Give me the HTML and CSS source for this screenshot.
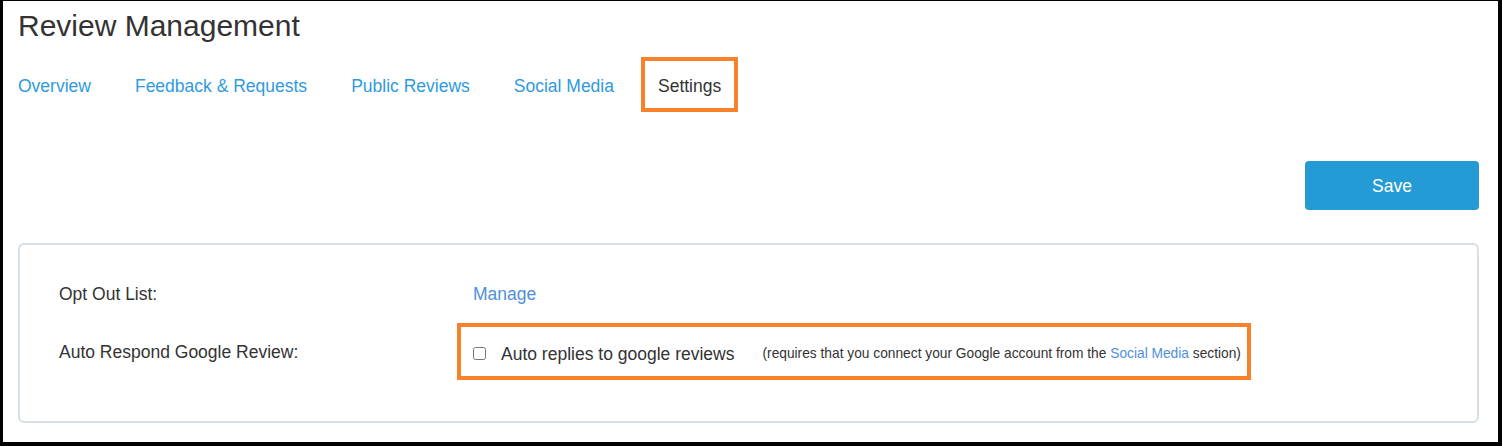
FILE: index.html
```html
<!DOCTYPE html>
<html lang="en">
<head>
<meta charset="utf-8">
<title>Review Management</title>
<link rel="stylesheet" href="styles.css">
</head>
<body>
<div class="page">
  <h1 class="title">Review Management</h1>
  <nav class="tabs">
    <a class="tab" href="#">Overview</a>
    <a class="tab" href="#">Feedback &amp; Requests</a>
    <a class="tab" href="#">Public Reviews</a>
    <a class="tab" href="#">Social Media</a>
    <a class="tab tab-active" href="#">Settings</a>
  </nav>
  <div class="actions">
    <button class="btn-save" type="button">Save</button>
  </div>
  <section class="card">
    <div class="row">
      <div class="label">Opt Out List:</div>
      <div class="value"><a class="link" href="#">Manage</a></div>
    </div>
    <div class="row">
      <div class="label">Auto Respond Google Review:</div>
      <div class="value">
        <label class="check highlight">
          <input type="checkbox" class="checkbox">
          <span class="check-text">Auto replies to google reviews</span>
          <span class="note">(requires that you connect your Google account from the <a class="link" href="#">Social Media</a> section)</span>
        </label>
      </div>
    </div>
  </section>
</div>
</body>
</html>
```

FILE: styles.css
```css
html, body {
  margin: 0;
  padding: 0;
  background: #fff;
}

body {
  font-family: "Liberation Sans", Arial, sans-serif;
  color: #333;
}

.page {
  box-sizing: border-box;
  width: 1502px;
  height: 446px;
  border-style: solid;
  border-color: #000;
  border-width: 1px 4px 4px 3px;
  padding: 7px 19px 19px 15px;
  display: flex;
  flex-direction: column;
}

.title {
  margin: 0;
  font-size: 30px;
  line-height: 36px;
  font-weight: normal;
  color: #333;
}

.tabs {
  margin-top: 32px;
  display: flex;
  gap: 44px;
}

.tab {
  font-size: 17.5px;
  line-height: 21px;
  color: #2f9ae0;
  text-decoration: none;
}

.tab-active {
  position: relative;
  color: #333;
}

.tab-active::after {
  content: "";
  position: absolute;
  left: -17px;
  right: -17px;
  top: -19px;
  bottom: -15px;
  border: 4px solid #f7822b;
}

.actions {
  margin-top: 64px;
  display: flex;
  justify-content: flex-end;
}

.btn-save {
  width: 174px;
  height: 49px;
  border: none;
  border-radius: 4px;
  background: #259bd6;
  color: #fff;
  font-family: "Liberation Sans", Arial, sans-serif;
  font-size: 17.5px;
  padding: 2px 0 0;
}

.card {
  margin-top: 33px;
  box-sizing: border-box;
  height: 180px;
  border: 2px solid #d6dfe6;
  border-radius: 6px;
  padding: 37px 20px 0 39px;
  display: flex;
  flex-direction: column;
  gap: 34px;
}

.row {
  display: flex;
  align-items: center;
  height: 24px;
  font-size: 17.5px;
}

.label {
  width: 414px;
  line-height: 24px;
  color: #333;
}

.value {
  line-height: 24px;
}

.link {
  color: #4f8fdc;
  text-decoration: none;
}

.check {
  position: relative;
  display: inline-flex;
  align-items: center;
  height: 24px;
  top: 2px;
}

.highlight::after {
  content: "";
  position: absolute;
  left: -16px;
  right: -10px;
  top: -19px;
  bottom: -14px;
  border: 4px solid #f7822b;
}

.checkbox {
  margin: 0 15px 0 0;
  width: 13px;
  height: 13px;
}

.check-text {
  color: #333;
}

.note {
  margin-left: 28px;
  font-size: 13.75px;
  color: #333;
}
```
